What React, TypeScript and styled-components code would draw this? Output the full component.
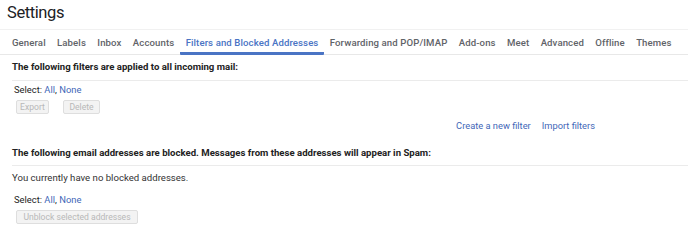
import React from "react"
import styled, { createGlobalStyle } from "styled-components"

const GlobalStyle = createGlobalStyle`
  body {
    margin: 0;
    background: #ffffff;
    font-family: Roboto, "Liberation Sans", Arial, sans-serif;
    color: #222222;
  }
`

const LINK = "#3f67b8"

const Page = styled.div`
  width: 688px;
  height: 245px;
  overflow: hidden;
`

const Title = styled.h1`
  margin: 0;
  padding-left: 7px;
  height: 29px;
  line-height: 26px;
  font-size: 16.5px;
  font-weight: 400;
  letter-spacing: -0.4px;
  color: #202124;
`

const TabBar = styled.nav`
  display: flex;
  height: 24px;
  padding-left: 6.3px;
  border-top: 1px solid #f1f1f1;
  border-bottom: 1px solid #e8e8e8;
`

const Tab = styled.span<{ active?: boolean }>`
  display: flex;
  align-items: center;
  padding: 2px 5.7px 0;
  font-size: 9.6px;
  font-weight: 500;
  letter-spacing: 0.1px;
  color: ${(p) => (p.active ? "#4a74c4" : "#5f6368")};
  border-bottom: 3px solid ${(p) => (p.active ? "#4a74c4" : "transparent")};
  border-radius: 1px;
  margin-bottom: -1px;
  white-space: nowrap;
`

const Section = styled.section`
  padding: 0 0 0 12px;
`

const Heading = styled.div<{ top: number; height: number }>`
  padding-top: ${(p) => p.top}px;
  height: ${(p) => p.height}px;
  font-size: 9.6px;
  font-weight: 700;
  line-height: 14px;
  color: #222222;
  border-bottom: 1px solid #ebebeb;
`

const SelectRow = styled.div<{ top: number }>`
  padding: ${(p) => p.top}px 0 0 2px;
  font-size: 9.4px;
  line-height: 14px;
  color: #222222;
`

const Link = styled.span`
  color: ${LINK};
  cursor: pointer;
`

const ButtonRow = styled.div`
  display: flex;
  gap: 14px;
  padding-left: 4px;
  margin-top: 3px;
`

const DisabledButton = styled.button<{ width: number }>`
  box-sizing: border-box;
  width: ${(p) => p.width}px;
  height: 14px;
  padding: 0;
  border: 1px solid #dedede;
  border-radius: 2px;
  background: #f3f3f3;
  color: #b8b8b8;
  font-family: Roboto, "Liberation Sans", Arial, sans-serif;
  font-size: 8.6px;
  line-height: 12px;
  white-space: nowrap;
`

const ActionRow = styled.div`
  display: flex;
  justify-content: flex-end;
  gap: 11px;
  padding-right: 93px;
  margin-top: 5px;
  font-size: 9.3px;
  line-height: 14px;
`

const Notice = styled.div`
  padding-top: 5px;
  height: 14px;
  font-size: 9.6px;
  line-height: 14px;
  color: #333333;
`

const tabs = [
  "General",
  "Labels",
  "Inbox",
  "Accounts",
  "Filters and Blocked Addresses",
  "Forwarding and POP/IMAP",
  "Add-ons",
  "Meet",
  "Advanced",
  "Offline",
  "Themes",
]

const Select: React.FC<{ top: number }> = ({ top }) => (
  <SelectRow top={top}>
    Select: <Link>All</Link>, <Link>None</Link>
  </SelectRow>
)

const App: React.FC = () => (
  <Page>
    <GlobalStyle />
    <Title>Settings</Title>
    <TabBar>
      {tabs.map((t) => (
        <Tab key={t} active={t === "Filters and Blocked Addresses"}>
          {t}
        </Tab>
      ))}
    </TabBar>
    <Section>
      <Heading top={5} height={20}>
        The following filters are applied to all incoming mail:
      </Heading>
      <Select top={2} />
      <ButtonRow>
        <DisabledButton width={33}>Export</DisabledButton>
        <DisabledButton width={37}>Delete</DisabledButton>
      </ButtonRow>
      <ActionRow>
        <Link>Create a new filter</Link>
        <Link>Import filters</Link>
      </ActionRow>
      <Heading top={13} height={19}>
        The following email addresses are blocked. Messages from these addresses will appear in Spam:
      </Heading>
      <Notice>You currently have no blocked addresses.</Notice>
      <Select top={8} />
      <ButtonRow>
        <DisabledButton width={122}>Unblock selected addresses</DisabledButton>
      </ButtonRow>
    </Section>
  </Page>
)

export default App
